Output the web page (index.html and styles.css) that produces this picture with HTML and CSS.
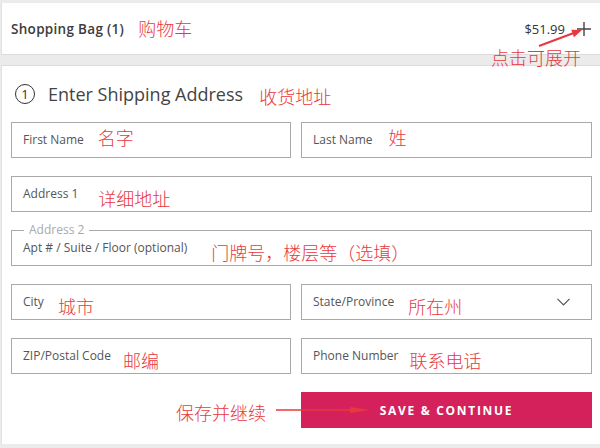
FILE: index.html
```html
<!DOCTYPE html>
<html>
<head>
<meta charset="utf-8">
<link rel="stylesheet" href="styles.css">
</head>
<body>
<div class="page">
  <div class="bag">
    <span class="bag-title">Shopping Bag (1)</span>
    <span class="note note-bag">购物车</span>
    <span class="price">$51.99</span>
    <svg class="plus" width="14" height="14" viewBox="0 0 14 14"><path d="M7 0V14M0 7H14" stroke="#444" stroke-width="1.4" fill="none"/></svg>
  </div>
  <div class="form">
    <div class="step">
      <span class="step-num">1</span>
      <span class="step-title">Enter Shipping Address</span>
      <span class="note note-step">收货地址</span>
    </div>
    <div class="grid">
      <div class="field"><span class="label">First Name</span><span class="note note-up">名字</span></div>
      <div class="field"><span class="label">Last Name</span><span class="note note-up note-w">姓</span></div>
      <div class="field wide"><span class="label">Address 1</span><span class="note note-down note-w2">详细地址</span></div>
      <div class="field wide field-legend"><span class="legend">Address 2</span><span class="label">Apt # / Suite / Floor (optional)</span><span class="note note-down note-w3">门牌号，楼层等（选填）</span></div>
      <div class="field"><span class="label">City</span><span class="note note-down">城市</span></div>
      <div class="field"><span class="label">State/Province</span><span class="note note-down">所在州</span>
        <svg class="chev" width="13" height="8" viewBox="0 0 13 8"><path d="M0.5 0.8L6.5 6.8L12.5 0.8" stroke="#555" stroke-width="1.2" fill="none"/></svg></div>
      <div class="field"><span class="label">ZIP/Postal Code</span><span class="note note-down note-n">邮编</span></div>
      <div class="field"><span class="label">Phone Number</span><span class="note note-down note-n2">联系电话</span></div>
      <div class="save-note"><span class="note">保存并继续</span></div>
      <button class="btn">SAVE &amp; CONTINUE</button>
    </div>
  </div>
  <span class="note note-expand">点击可展开</span>
  <svg class="arrow-top" width="50" height="24" viewBox="0 0 50 24"><line x1="4" y1="20" x2="40" y2="6.5" stroke="#e8383d" stroke-width="2"/><polygon points="47,4 39,11.2 36.2,3.7" fill="#e8383d"/></svg>
  <svg class="arrow-btn" width="100" height="12" viewBox="0 0 100 12"><line x1="2" y1="6" x2="80" y2="6" stroke="#e8383d" stroke-width="1.6"/><polygon points="76,3 96,6 76,9" fill="#e8383d"/></svg>
</div>
</body>
</html>
```
FILE: styles.css
```css
html, body {
  margin: 0;
  padding: 0;
}
body {
  background: #ebebeb;
  font-family: "Open Sans", "Liberation Sans", sans-serif;
  color: #444;
}
.page {
  position: relative;
  width: 600px;
  height: 448px;
  padding-top: 3px;
  box-sizing: border-box;
}
.bag {
  margin-left: 1px;
  height: 51px;
  background: #fff;
  border-left: 1px solid #e2e2e2;
  border-bottom: 1px solid #dcdcdc;
  display: flex;
  align-items: center;
  padding: 0 9px 0 9px;
}
.bag-title {
  font-size: 13.5px;
  font-weight: 600;
  letter-spacing: 0.3px;
  color: #3c3c3c;
}
.note {
  font-family: "Noto Sans CJK SC", sans-serif;
  font-size: 18px;
  font-weight: 300;
  line-height: 22px;
  color: #e8383d;
  white-space: nowrap;
}
.note-bag {
  margin-left: 14px;
  margin-top: -2px;
}
.price {
  margin-left: auto;
  font-size: 13px;
  color: #333;
}
.plus {
  margin-left: 12px;
  margin-top: 1px;
}
.form {
  margin: 10px 0 0 1px;
  background: #fff;
  border-left: 1px solid #e2e2e2;
  border-top: 1px solid #dcdcdc;
  padding: 18px 8px 16px 9px;
  height: 344px;
}
.step {
  display: flex;
  align-items: center;
  height: 20px;
  margin-left: 4px;
}
.step-num {
  width: 18px;
  height: 18px;
  border: 1px solid #333;
  border-radius: 50%;
  font-size: 13px;
  line-height: 18px;
  text-align: center;
  color: #333;
}
.step-title {
  margin-left: 13px;
  font-size: 18px;
  color: #444;
}
.note-step {
  margin-left: 16px;
  margin-top: 4px;
}
.grid {
  margin-top: 18px;
  display: grid;
  grid-template-columns: 280px 1fr;
  column-gap: 10px;
  row-gap: 18px;
}
.field {
  position: relative;
  height: 36px;
  box-sizing: border-box;
  border: 1px solid #a9a9a9;
  display: flex;
  align-items: center;
  padding: 0 11px;
}
.wide {
  grid-column: 1 / 3;
}
.label {
  font-size: 12px;
  color: #555;
  margin-top: -2px;
}
.field .note {
  margin-left: 14px;
}
.field .note-w {
  margin-left: 16px;
}
.field .note-w2 {
  margin-left: 20px;
}
.field .note-w3 {
  margin-left: 24px;
}
.field .note-n {
  margin-left: 12px;
}
.field .note-n2 {
  margin-left: 11px;
}
.note-up {
  margin-bottom: 6px;
}
.note-down {
  margin-top: 7px;
}
.legend {
  position: absolute;
  left: 12px;
  top: -9px;
  padding: 0 5px;
  background: #fff;
  font-size: 12px;
  line-height: 16px;
  color: #aaa;
}
.chev {
  margin-left: auto;
  margin-right: 10px;
}
.save-note {
  display: flex;
  align-items: center;
  justify-content: flex-end;
  padding-right: 25px;
  padding-top: 3px;
}
.btn {
  height: 36px;
  border: none;
  background: #d4215c;
  color: #fff;
  font-family: "Open Sans", "Liberation Sans", sans-serif;
  font-size: 12px;
  font-weight: 700;
  letter-spacing: 1.7px;
  padding: 0;
}
.note-expand {
  position: absolute;
  left: 491px;
  top: 46px;
}
.arrow-top {
  position: absolute;
  left: 535px;
  top: 26px;
}
.arrow-btn {
  position: absolute;
  left: 274px;
  top: 404px;
}
```
